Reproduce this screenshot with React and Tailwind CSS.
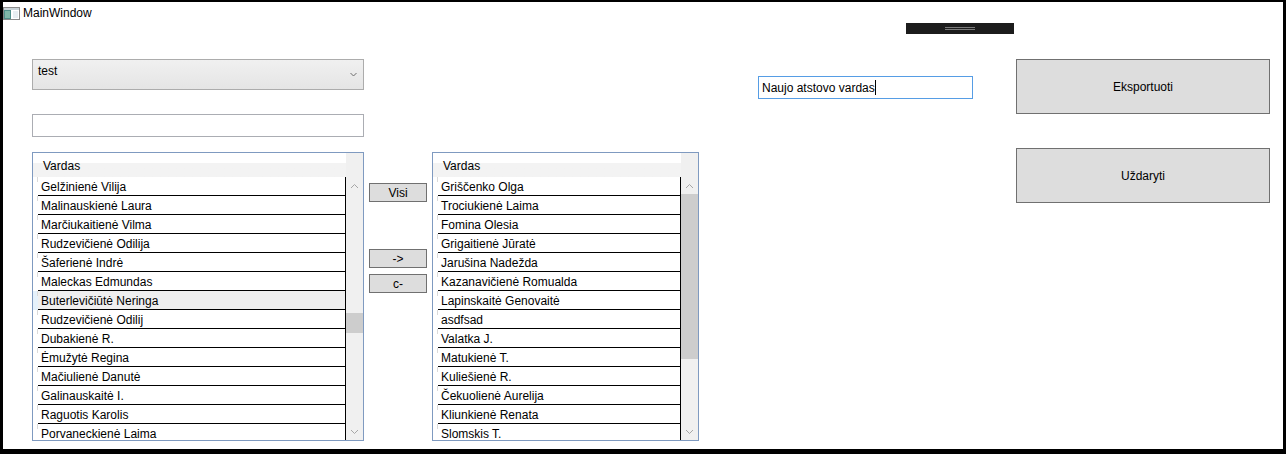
import React from "react";

const leftNames = [
  "Gelžinienė Vilija",
  "Malinauskienė Laura",
  "Marčiukaitienė Vilma",
  "Rudzevičienė Odilija",
  "Šaferienė Indrė",
  "Maleckas Edmundas",
  "Buterlevičiūtė Neringa",
  "Rudzevičienė Odilij",
  "Dubakienė R.",
  "Ėmužytė Regina",
  "Mačiulienė Danutė",
  "Galinauskaitė I.",
  "Raguotis Karolis",
  "Porvaneckienė Laima",
];

const rightNames = [
  "Griščenko Olga",
  "Trociukienė Laima",
  "Fomina Olesia",
  "Grigaitienė Jūratė",
  "Jarušina Nadežda",
  "Kazanavičienė Romualda",
  "Lapinskaitė Genovaitė",
  "asdfsad",
  "Valatka J.",
  "Matukienė T.",
  "Kuliešienė R.",
  "Čekuolienė Aurelija",
  "Kliunkienė Renata",
  "Slomskis T.",
];

function Chevron({ up }) {
  return (
    <svg width="9" height="6" viewBox="0 0 9 6">
      <path
        d={up ? "M1 5 L4.5 1.5 L8 5" : "M1 1 L4.5 4.5 L8 1"}
        fill="none"
        stroke="#a6a6a6"
        strokeWidth="1"
      />
    </svg>
  );
}

function Row({ name, selected }) {
  return (
    <div className="flex h-[19px] shrink-0">
      <div
        className={
          selected
            ? "w-[5px] flex justify-end bg-[#e5f1fb]"
            : "w-[5px] flex justify-end bg-white"
        }
      >
        <div className="w-px h-[5px] bg-[#dadada]" />
      </div>
      <div
        className={
          selected
            ? "flex-1 border-r border-b border-black pl-[3px] pt-[2px] flex items-center bg-[#efefef] whitespace-nowrap overflow-hidden"
            : "flex-1 border-r border-b border-black pl-[3px] pt-[2px] flex items-center bg-white whitespace-nowrap overflow-hidden"
        }
      >
        {name}
      </div>
    </div>
  );
}

function ListView({ names, widthClass, selectedIndex, thumbClass }) {
  return (
    <div
      className={`${widthClass} h-[289px] border border-[#7f9ac0] flex overflow-hidden bg-white`}
    >
      <div className="flex-1 flex flex-col overflow-hidden">
        <div className="h-[24px] shrink-0 flex items-center pl-[10px] pt-[2px] bg-linear-to-b from-white from-40% to-[#f3f3f3] to-40%">
          Vardas
        </div>
        {names.map((n, i) => (
          <Row key={i} name={n} selected={i === selectedIndex} />
        ))}
      </div>
      <div className="w-[17px] bg-[#f0f0f0] flex flex-col shrink-0">
        <div className="h-[24px] shrink-0" />
        <div className="h-[17px] shrink-0 flex items-center justify-center">
          <Chevron up />
        </div>
        <div className="flex-1 flex flex-col">
          <div className={thumbClass} />
        </div>
        <div className="h-[17px] shrink-0 flex items-center justify-center">
          <Chevron />
        </div>
      </div>
    </div>
  );
}

function SmallButton({ children, className }) {
  return (
    <div
      className={`w-[58px] h-[19px] border border-[#707070] bg-[#dddddd] flex items-center justify-center ${className}`}
    >
      {children}
    </div>
  );
}

export default function App() {
  return (
    <div
      className="w-[1286px] h-[454px] bg-black pt-[2px] px-[3px] pb-[5px] text-[12px] leading-[14px] text-black"
      style={{ fontFamily: '"Liberation Sans", Arial, sans-serif' }}
    >
      <div className="w-full h-full bg-white flex flex-col overflow-hidden">
        {/* title bar */}
        <div className="h-[21px] shrink-0 flex items-center">
          <svg width="17" height="13" viewBox="0 0 17 13" className="mt-[1px]">
            <rect x="0.5" y="0.5" width="16" height="12" fill="#ffffff" stroke="#8a8a8a" />
            <rect x="1" y="1" width="15" height="2" fill="#c9d3d8" />
            <rect x="1" y="3" width="7" height="9" fill="#4f8f8a" />
            <rect x="2" y="4" width="5" height="7" fill="#7fb7a8" />
            <rect x="10" y="4" width="5" height="7" fill="#e8eef2" />
          </svg>
          <span className="ml-[3px]">MainWindow</span>
        </div>

        {/* content */}
        <div className="flex">
          {/* left column */}
          <div className="ml-[29px] w-[667px] flex flex-col">
            <div className="mt-[36px] w-[332px] h-[31px] border border-[#acacac] bg-linear-to-b from-[#f0f0f0] to-[#e5e5e5] flex items-start pt-[4px] pl-[5px] pr-[6px]">
              <span className="flex-1">test</span>
              <svg width="7" height="5" viewBox="0 0 7 5" className="mt-[8px]">
                <path d="M0.5 1 L3.5 4 L6.5 1" fill="none" stroke="#6d6d6d" strokeWidth="1" />
              </svg>
            </div>
            <div className="mt-[24px] w-[332px] h-[23px] border border-[#abadb3] bg-white" />
            <div className="mt-[15px] flex">
              <ListView
                names={leftNames}
                widthClass="w-[332px]"
                selectedIndex={6}
                thumbClass="mt-[119px] h-[20px] bg-[#cdcdcd]"
              />
              <div className="w-[68px] flex flex-col pl-[5px]">
                <SmallButton className="mt-[31px]">Visi</SmallButton>
                <SmallButton className="mt-[47px]">-&gt;</SmallButton>
                <SmallButton className="mt-[6px]">c-</SmallButton>
              </div>
              <ListView
                names={rightNames}
                widthClass="w-[267px]"
                selectedIndex={-1}
                thumbClass="mt-0 h-[165px] bg-[#cdcdcd]"
              />
            </div>
          </div>

          {/* middle column */}
          <div className="w-[317px] flex flex-col">
            <div className="ml-[207px] w-[108px] h-[11px] bg-[#1c1c1c] flex flex-col items-center pt-[4px] gap-[1px]">
              <div className="w-[30px] h-px bg-[#7a7a7a]" />
              <div className="w-[30px] h-px bg-[#7a7a7a]" />
            </div>
            <div className="ml-[59px] mt-[42px] w-[215px] h-[23px] border border-[#569de5] bg-white flex items-center pl-[3px]">
              <span>Naujo atstovo vardas</span>
              <span className="w-px h-[15px] bg-black" />
            </div>
          </div>

          {/* right column */}
          <div className="w-[254px] flex flex-col">
            <div className="mt-[36px] h-[55px] border border-[#707070] bg-[#dddddd] flex items-center justify-center">
              Eksportuoti
            </div>
            <div className="mt-[34px] h-[55px] border border-[#707070] bg-[#dddddd] flex items-center justify-center">
              Uždaryti
            </div>
          </div>
        </div>
      </div>
    </div>
  );
}
